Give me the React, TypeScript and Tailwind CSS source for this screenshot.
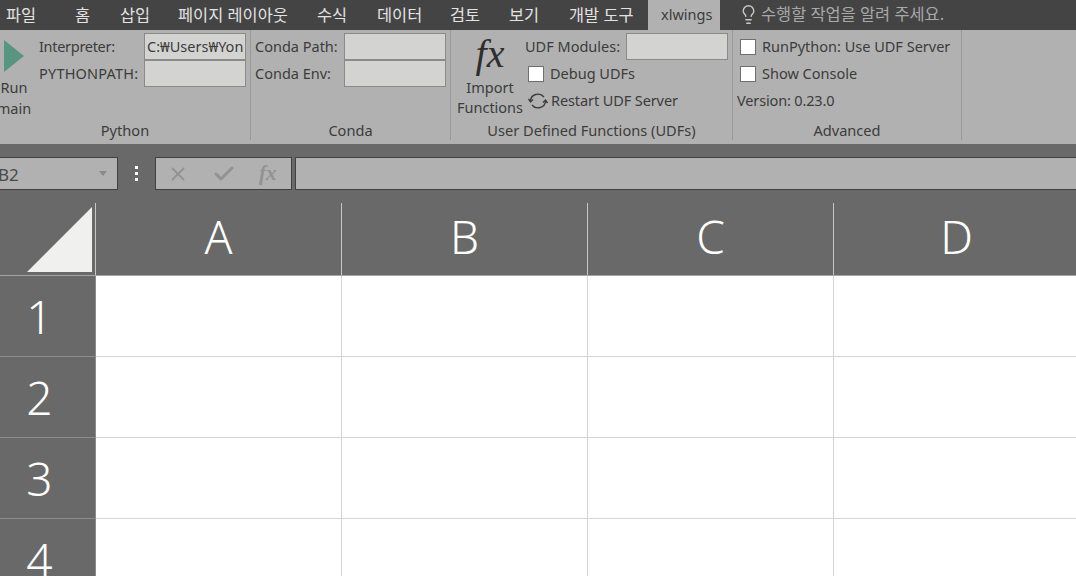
import React from "react";
import { Lightbulb, X, Check } from "lucide-react";

const font = { fontFamily: '"Noto Sans", "Noto Sans CJK KR", sans-serif' };

const tabs: [string, string][] = [
  ["파일", "ml-[6px] w-[69px]"],
  ["홈", "w-[45px]"],
  ["삽입", "w-[58px]"],
  ["페이지 레이아웃", "w-[139px]"],
  ["수식", "w-[60px]"],
  ["데이터", "w-[73px]"],
  ["검토", "w-[59px]"],
  ["보기", "w-[60px]"],
  ["개발 도구", "w-[80px]"],
];

function Field({ value, w = "w-[102px]" }: { value?: string; w?: string }) {
  return (
    <div className={`${w} h-[27px] border border-[#8a8a8a] bg-[#d3d3d1] pl-[2px] text-[14.5px] leading-[25px] overflow-hidden whitespace-nowrap`}>
      {value}
    </div>
  );
}

function Check2({ label, cls = "" }: { label: string; cls?: string }) {
  return (
    <div className={`flex h-[27px] items-center ${cls}`}>
      <div className="h-[16px] w-[16px] border border-[#6f6f6f] bg-white" />
      <span className="ml-[6px]">{label}</span>
    </div>
  );
}

function Group({ label, w, children }: { label: string; w: string; children: React.ReactNode }) {
  return (
    <div className={`${w} relative flex h-full shrink-0 flex-col border-r border-[#999999]`}>
      <div className="flex h-[98px] pt-[3px]">{children}</div>
      <div className="text-center text-[14.6px] leading-[20px] text-[#3c3c3c]">{label}</div>
    </div>
  );
}

function ColHead({ c }: { c: string }) {
  return (
    <div className="flex h-full w-[246px] shrink-0 items-center justify-center border-r border-[#c6c6c6] pb-[6px] text-[46px] font-[350] text-white">
      {c}
    </div>
  );
}

function Row({ n }: { n: number }) {
  return (
    <div className="flex h-[81px] shrink-0">
      <div className="flex w-[96px] shrink-0 items-center justify-center border-b border-r border-[#8c8c8c] bg-[#696969] pr-[16px] text-[46px] font-[350] text-white">
        {n}
      </div>
      {[0, 1, 2, 3].map((i) => (
        <div key={i} className="w-[246px] shrink-0 border-b border-r border-[#d4d4d4] bg-white" />
      ))}
    </div>
  );
}

export default function App() {
  return (
    <div className="flex h-[576px] w-[1076px] flex-col overflow-hidden bg-[#696969] text-[14.5px] text-[#3c3c3c]" style={font}>
      {/* tab strip */}
      <div className="flex h-[30px] shrink-0 items-center bg-[#444444] text-[16.4px] text-[#e2e2e2]">
        {tabs.map(([t, c]) => (
          <div key={t} className={`${c} whitespace-nowrap leading-[30px]`}>{t}</div>
        ))}
        <div className="ml-[-1px] flex h-full w-[72px] items-center bg-[#b1b1b1] pl-[13px] text-[14.5px] text-[#3c3c3c]">xlwings</div>
        <div className="ml-[20px] flex items-center text-[#a8a8a8]">
          <Lightbulb size={21} strokeWidth={1.6} className="ml-[-2px] text-[#c8c8c8]" />
          <span className="ml-[2px] mt-[-2px]">수행할 작업을 알려 주세요.</span>
        </div>
      </div>

      {/* ribbon */}
      <div className="flex h-[114px] shrink-0 items-stretch bg-[#b1b1b1] pb-[4px] leading-[27px]">
        <Group label="Python" w="w-[251px]">
          <div className="ml-[-4px] flex w-[36px] shrink-0 flex-col items-center">
            <svg width="20" height="32" viewBox="0 0 20 32" className="ml-[-1px] mt-[7px]">
              <path d="M0 0 L20 16 L0 32 Z" fill="#5a9582" />
            </svg>
            <div className="mt-[5px] text-center leading-[21px]">Run<br />main</div>
          </div>
          <div className="ml-[7px] w-[105px] shrink-0">
            <div className="h-[27px] tracking-[-0.3px]">Interpreter:</div>
            <div className="h-[27px] tracking-[0.2px] whitespace-nowrap">PYTHONPATH:</div>
          </div>
          <div>
            <Field value="C:₩Users₩Yon" />
            <Field />
          </div>
        </Group>
        <Group label="Conda" w="w-[200px]">
          <div className="ml-[4px] w-[89px] shrink-0">
            <div className="h-[27px]">Conda Path:</div>
            <div className="h-[27px]">Conda Env:</div>
          </div>
          <div>
            <Field />
            <Field />
          </div>
        </Group>
        <Group label="User Defined Functions (UDFs)" w="w-[282px]">
          <div className="ml-[5px] flex w-[68px] shrink-0 flex-col items-center">
            <div className="mt-[-1px] h-[47px] text-[40px] leading-[44px] italic text-[#2e2e2e]" style={{ fontFamily: '"Liberation Serif", serif' }}>fx</div>
            <div className="mt-[-2px] text-center leading-[20px] whitespace-nowrap">Import<br />Functions</div>
          </div>
          <div className="ml-[1px] flex-1">
            <div className="flex h-[27px] items-center">
              <span className="w-[101px] whitespace-nowrap">UDF Modules:</span>
              <Field />
            </div>
            <Check2 label="Debug UDFs" cls="ml-[3px]" />
            <div className="ml-[3px] flex h-[27px] items-center">
              <svg width="20" height="20" viewBox="0 0 20 20" fill="none" stroke="#3c3c3c" strokeWidth="1.4">
                <path d="M2.5 10 A7.5 7 0 0 1 16 6" />
                <path d="M17.5 10 A7.5 7 0 0 1 4 14" />
                <path d="M0.5 8 L2.5 11 L5 8.5" />
                <path d="M19.5 12 L17.5 9 L15 11.5" />
              </svg>
              <span className="ml-[3px] tracking-[-0.1px]">Restart UDF Server</span>
            </div>
          </div>
        </Group>
        <Group label="Advanced" w="w-[229px]">
          <div className="ml-[7px]">
            <Check2 label="RunPython: Use UDF Server" />
            <Check2 label="Show Console" />
            <div className="ml-[-3px] h-[27px] tracking-[-0.15px]">Version: 0.23.0</div>
          </div>
        </Group>
      </div>

      {/* formula bar */}
      <div className="mt-[13px] flex h-[33px] shrink-0 items-stretch">
        <div className="ml-[-4px] flex w-[122px] items-center justify-between border border-[#404040] bg-[#b1b1b1] pl-[1px] pr-[10px] text-[17px] text-[#4a4a4a]">
          <span className="mt-[3px]">B2</span>
          <span className="h-0 w-0 border-x-[4px] border-t-[5px] border-x-transparent border-t-[#8a8a8a]" />
        </div>
        <div className="flex w-[37px] flex-col items-center justify-center gap-[3px]">
          <i className="block h-[3px] w-[3px] bg-white" />
          <i className="block h-[3px] w-[3px] bg-white" />
          <i className="block h-[3px] w-[3px] bg-white" />
        </div>
        <div className="flex w-[137px] items-center border border-[#404040] bg-[#b1b1b1] text-[#929292]">
          <X size={22} strokeWidth={2} className="ml-[11px]" />
          <Check size={24} strokeWidth={3} className="ml-[23px]" />
          <span className="ml-[23px] text-[21px] font-bold italic" style={{ fontFamily: '"Liberation Serif", serif' }}>fx</span>
        </div>
        <div className="ml-[3px] flex-1 border border-r-0 border-[#404040] bg-[#b1b1b1]" />
      </div>

      {/* sheet */}
      <div className="mt-[13px] flex h-[73px] shrink-0 border-b border-[#a5a5a5] leading-none">
        <div className="flex w-[96px] shrink-0 items-end border-r border-[#c6c6c6] pb-[3px] pl-[27px]">
          <svg width="66" height="65" viewBox="0 0 66 65">
            <path d="M0 65 L65 0 V65 Z" fill="#f0f0ee" />
          </svg>
        </div>
        {["A", "B", "C", "D"].map((c) => <ColHead key={c} c={c} />)}
      </div>
      {[1, 2, 3, 4].map((n) => <Row key={n} n={n} />)}
    </div>
  );
}
